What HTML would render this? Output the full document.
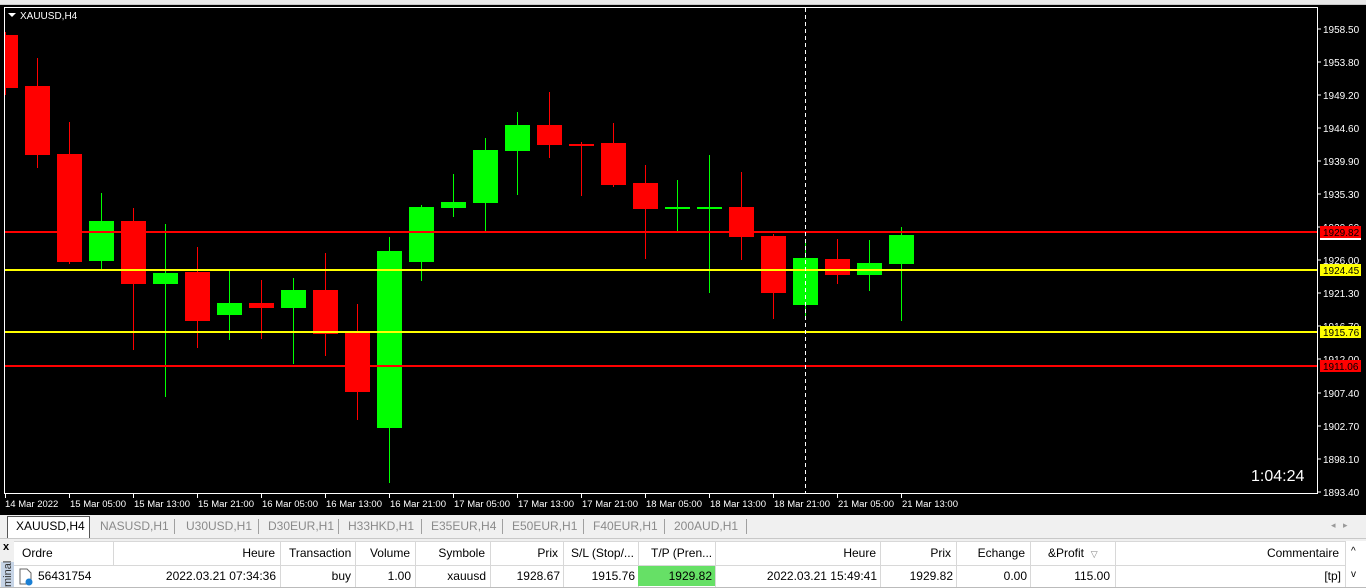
<!DOCTYPE html>
<html><head><meta charset="utf-8"><style>
*{margin:0;padding:0;box-sizing:border-box}
body{width:1366px;height:588px;overflow:hidden;background:#f0f0f0;font-family:"Liberation Sans",sans-serif;position:relative}
.abs{position:absolute}
.tab{position:absolute;top:519px;font-size:12px;color:#8a8a8a}
.sep{position:absolute;top:519px;width:1px;height:15px;background:#a0a0a0}
.th,.td{position:absolute;font-size:12px;color:#000;white-space:nowrap}
.th{top:546px}.td{top:569px}
.vl{position:absolute;width:1px;background:#d8d8d8}
</style></head><body>
<div class="abs" style="left:0;top:0;width:1366px;height:5px;background:#e8e8e8;border-bottom:1px solid #c8c8c8"></div>
<svg class="abs" style="left:0;top:5px" width="1366" height="510" viewBox="0 5 1366 510">
<rect x="0" y="5" width="1366" height="510" fill="#000"/>
<rect x="4.5" y="7.5" width="1313" height="486" fill="none" stroke="#fff" stroke-width="1"/>
<g font-family="Liberation Sans,sans-serif" font-size="10" fill="#fff">
<path d="M8 13h8l-4 4z" fill="#fff"/>
<text x="20" y="19">XAUUSD,H4</text>
</g>
<g id="c"></g>
<line x1="5" y1="232" x2="1317" y2="232" stroke="#f00" stroke-width="2"/>
<line x1="5" y1="270" x2="1317" y2="270" stroke="#ff0" stroke-width="2"/>
<line x1="5" y1="332" x2="1317" y2="332" stroke="#ff0" stroke-width="2"/>
<line x1="5" y1="366" x2="1317" y2="366" stroke="#f00" stroke-width="2"/>
<line x1="805.5" y1="8" x2="805.5" y2="493" stroke="#fff" stroke-dasharray="4,3"/>
<g font-family="Liberation Sans,sans-serif" font-size="10" fill="#fff">
<text x="1323" y="33">1958.50</text><text x="1323" y="66">1953.80</text><text x="1323" y="99">1949.20</text>
<text x="1323" y="132">1944.60</text><text x="1323" y="165">1939.90</text><text x="1323" y="198">1935.30</text>
<text x="1323" y="231">1930.60</text><text x="1323" y="264">1926.00</text><text x="1323" y="297">1921.30</text>
<text x="1323" y="330">1916.70</text><text x="1323" y="363">1912.00</text><text x="1323" y="397">1907.40</text>
<text x="1323" y="430">1902.70</text><text x="1323" y="463">1898.10</text><text x="1323" y="496">1893.40</text>
</g>
<g stroke="#fff"><path d="M1318 29h3M1318 62h3M1318 95h3M1318 128h3M1318 161h3M1318 194h3M1318 227h3M1318 260h3M1318 293h3M1318 326h3M1318 359h3M1318 393h3M1318 426h3M1318 459h3M1318 492h3"/></g>
<rect x="1320" y="226" width="41" height="12" fill="#f00"/><rect x="1320" y="238" width="41" height="2" fill="#fff"/>
<rect x="1320" y="264" width="41" height="12" fill="#ff0"/>
<rect x="1320" y="326" width="41" height="12" fill="#ff0"/>
<rect x="1320" y="360" width="41" height="12" fill="#f00"/>
<g font-family="Liberation Sans,sans-serif" font-size="10">
<text x="1323" y="236" fill="#000">1929.82</text><text x="1323" y="274" fill="#000">1924.45</text>
<text x="1323" y="336" fill="#000">1915.76</text><text x="1323" y="370" fill="#000">1911.06</text>
</g>
<text x="1251" y="481" font-family="Liberation Sans,sans-serif" font-size="16" fill="#fff">1:04:24</text>
<g stroke="#fff"><path d="M5.5 494v4M69.5 494v4M133.5 494v4M197.5 494v4M261.5 494v4M325.5 494v4M389.5 494v4M453.5 494v4M517.5 494v4M581.5 494v4M645.5 494v4M709.5 494v4M773.5 494v4M837.5 494v4M901.5 494v4"/></g>
<g font-family="Liberation Sans,sans-serif" font-size="9.5" fill="#fff">
<text x="5" y="507">14 Mar 2022</text><text x="70" y="507">15 Mar 05:00</text><text x="134" y="507">15 Mar 13:00</text>
<text x="198" y="507">15 Mar 21:00</text><text x="262" y="507">16 Mar 05:00</text><text x="326" y="507">16 Mar 13:00</text>
<text x="390" y="507">16 Mar 21:00</text><text x="454" y="507">17 Mar 05:00</text><text x="518" y="507">17 Mar 13:00</text>
<text x="582" y="507">17 Mar 21:00</text><text x="646" y="507">18 Mar 05:00</text><text x="710" y="507">18 Mar 13:00</text>
<text x="774" y="507">18 Mar 21:00</text><text x="838" y="507">21 Mar 05:00</text><text x="902" y="507">21 Mar 13:00</text>
</g>
</svg>
<script>
var d=[[-1,35,88,32,95,0],[0,86,155,58,168,0],[1,154,262,122,264,0],[2,221,261,193,271,1],[3,221,284,208,350,0],[4,273,284,224,397,1],[5,272,321,247,348,0],[6,303,315,270,340,1],[7,303,308,280,339,0],[8,290,308,278,364,1],[9,290,334,253,356,0],[10,333,392,304,420,0],[11,251,428,237,483,1],[12,207,262,205,281,1],[13,202,208,174,217,1],[14,150,203,138,233,1],[15,125,151,112,195,1],[16,125,145,92,158,0],[17,144,145,142,196,0],[18,143,185,123,187,0],[19,183,209,165,259,0],[20,207,209,180,233,1],[21,207,208,155,293,1],[22,207,237,172,260,0],[23,236,293,234,319,0],[24,258,305,241,318,1],[25,259,275,239,284,0],[26,263,275,240,291,1],[27,235,264,227,321,1]];
var s='';d.forEach(function(c){var x=37+32*c[0],col=c[5]?'#0f0':'#f00';var l=Math.max(5,x-12);
s+='<rect x="'+x+'" y="'+c[3]+'" width="1" height="'+(c[4]-c[3])+'" fill="'+col+'"/>';
s+='<rect x="'+l+'" y="'+c[1]+'" width="'+(x+13-l)+'" height="'+Math.max(2,c[2]-c[1])+'" fill="'+col+'"/>';});
document.getElementById('c').innerHTML=s;
</script>
<div class="abs" style="left:7px;top:516px;width:83px;height:22px;background:#fff;border:1px solid #555;border-bottom:none"></div>
<div class="tab" style="left:16px;color:#000">XAUUSD,H4</div>
<div class="tab" style="left:100px">NASUSD,H1</div><div class="sep" style="left:174px"></div>
<div class="tab" style="left:186px">U30USD,H1</div><div class="sep" style="left:258px"></div>
<div class="tab" style="left:268px">D30EUR,H1</div><div class="sep" style="left:338px"></div>
<div class="tab" style="left:348px">H33HKD,H1</div><div class="sep" style="left:421px"></div>
<div class="tab" style="left:431px">E35EUR,H4</div><div class="sep" style="left:502px"></div>
<div class="tab" style="left:512px">E50EUR,H1</div><div class="sep" style="left:583px"></div>
<div class="tab" style="left:593px">F40EUR,H1</div><div class="sep" style="left:664px"></div>
<div class="tab" style="left:674px">200AUD,H1</div><div class="sep" style="left:746px"></div>
<div class="abs" style="left:1331px;top:520px;font-size:9px;color:#999">◂ &nbsp; ▸</div>
<div class="abs" style="left:0;top:538px;width:1366px;height:1px;background:#c8c8c8"></div>
<div class="abs" style="left:14px;top:541px;width:1352px;height:47px;background:#fff"></div>
<div class="abs" style="left:14px;top:541px;width:1331px;height:1px;background:#d8d8d8"></div>
<div class="abs" style="left:14px;top:565px;width:1331px;height:1px;background:#d8d8d8"></div>
<div class="abs" style="left:3px;top:541px;font-size:11px;font-weight:bold">x</div>
<div class="abs" style="left:1px;top:562px;width:13px;height:26px;background:#c6d4e6"></div>
<div class="abs" style="left:-5px;top:568px;font-size:11px;color:#333;transform:rotate(-90deg);transform-origin:center;width:26px">minal</div>
<div class="vl" style="left:113px;top:541px;height:24px"></div>
<div class="vl" style="left:280px;top:541px;height:47px"></div><div class="vl" style="left:355px;top:541px;height:47px"></div>
<div class="vl" style="left:415px;top:541px;height:47px"></div><div class="vl" style="left:490px;top:541px;height:47px"></div>
<div class="vl" style="left:563px;top:541px;height:47px"></div><div class="vl" style="left:638px;top:541px;height:47px"></div>
<div class="vl" style="left:715px;top:541px;height:47px"></div><div class="vl" style="left:880px;top:541px;height:47px"></div>
<div class="vl" style="left:956px;top:541px;height:47px"></div><div class="vl" style="left:1030px;top:541px;height:47px"></div>
<div class="vl" style="left:1115px;top:541px;height:47px"></div><div class="vl" style="left:1345px;top:541px;height:47px"></div>
<div class="th" style="left:22px">Ordre</div>
<div class="th" style="right:1091px">Heure</div><div class="th" style="left:289px">Transaction</div>
<div class="th" style="right:956px">Volume</div><div class="th" style="right:881px">Symbole</div>
<div class="th" style="right:808px">Prix</div><div class="th" style="left:571px">S/L (Stop/...</div>
<div class="th" style="left:651px">T/P (Pren...</div><div class="th" style="right:490px">Heure</div>
<div class="th" style="right:415px">Prix</div><div class="th" style="right:341px">Echange</div>
<div class="th" style="left:1048px">&amp;Profit &nbsp;<span style="color:#888;font-size:9px">▽</span></div>
<div class="th" style="right:27px">Commentaire</div>
<div class="th" style="left:1351px;font-size:10px">^</div>
<div class="abs" style="left:638px;top:566px;width:77px;height:20px;background:#66e066"></div>
<svg class="abs" style="left:18px;top:568px" width="16" height="18"><path d="M2 1h7l4 4v11H2z" fill="#fff" stroke="#666"/><circle cx="11" cy="14" r="3.5" fill="#1a7fd4"/></svg>
<div class="td" style="left:38px">56431754</div>
<div class="td" style="right:1090px">2022.03.21 07:34:36</div><div class="td" style="right:1015px">buy</div>
<div class="td" style="right:955px">1.00</div><div class="td" style="right:880px">xauusd</div>
<div class="td" style="right:806px">1928.67</div><div class="td" style="right:731px">1915.76</div>
<div class="td" style="right:654px">1929.82</div><div class="td" style="right:489px">2022.03.21 15:49:41</div>
<div class="td" style="right:413px">1929.82</div><div class="td" style="right:339px">0.00</div>
<div class="td" style="right:256px">115.00</div><div class="td" style="right:25px">[tp]</div>
<div class="td" style="left:1351px;font-size:10px">v</div>
<div class="abs" style="left:0;top:587px;width:1366px;height:1px;background:#bbb"></div>
</body></html>
